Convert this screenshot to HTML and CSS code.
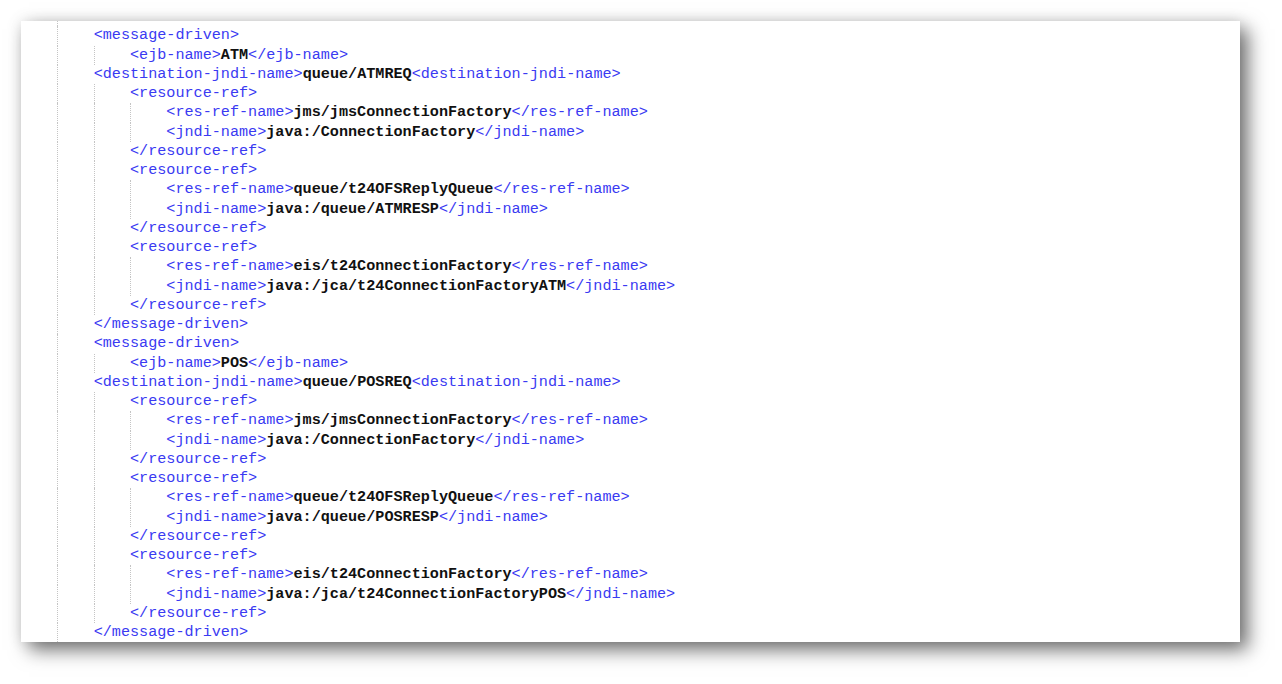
FILE: index.html
```html
<!DOCTYPE html>
<html lang="en">
<head>
  <meta charset="UTF-8" />
  <title>ejb-jar.xml</title>
  <link rel="stylesheet" href="styles.css">
</head>
<body>
  <div class="sheet">
    <div class="code">
      <div class="line"><i></i><span class="t">&lt;/session&gt;</span></div>
      <div class="line"><i></i><span class="t">&lt;message-driven&gt;</span></div>
      <div class="line"><i></i><i></i><span class="t">&lt;ejb-name&gt;</span><b>ATM</b><span class="t">&lt;/ejb-name&gt;</span></div>
      <div class="line"><i></i><span class="t">&lt;destination-jndi-name&gt;</span><b>queue/ATMREQ</b><span class="t">&lt;destination-jndi-name&gt;</span></div>
      <div class="line"><i></i><i></i><span class="t">&lt;resource-ref&gt;</span></div>
      <div class="line"><i></i><i></i><i></i><span class="t">&lt;res-ref-name&gt;</span><b>jms/jmsConnectionFactory</b><span class="t">&lt;/res-ref-name&gt;</span></div>
      <div class="line"><i></i><i></i><i></i><span class="t">&lt;jndi-name&gt;</span><b>java:/ConnectionFactory</b><span class="t">&lt;/jndi-name&gt;</span></div>
      <div class="line"><i></i><i></i><span class="t">&lt;/resource-ref&gt;</span></div>
      <div class="line"><i></i><i></i><span class="t">&lt;resource-ref&gt;</span></div>
      <div class="line"><i></i><i></i><i></i><span class="t">&lt;res-ref-name&gt;</span><b>queue/t24OFSReplyQueue</b><span class="t">&lt;/res-ref-name&gt;</span></div>
      <div class="line"><i></i><i></i><i></i><span class="t">&lt;jndi-name&gt;</span><b>java:/queue/ATMRESP</b><span class="t">&lt;/jndi-name&gt;</span></div>
      <div class="line"><i></i><i></i><span class="t">&lt;/resource-ref&gt;</span></div>
      <div class="line"><i></i><i></i><span class="t">&lt;resource-ref&gt;</span></div>
      <div class="line"><i></i><i></i><i></i><span class="t">&lt;res-ref-name&gt;</span><b>eis/t24ConnectionFactory</b><span class="t">&lt;/res-ref-name&gt;</span></div>
      <div class="line"><i></i><i></i><i></i><span class="t">&lt;jndi-name&gt;</span><b>java:/jca/t24ConnectionFactoryATM</b><span class="t">&lt;/jndi-name&gt;</span></div>
      <div class="line"><i></i><i></i><span class="t">&lt;/resource-ref&gt;</span></div>
      <div class="line"><i></i><span class="t">&lt;/message-driven&gt;</span></div>
      <div class="line"><i></i><span class="t">&lt;message-driven&gt;</span></div>
      <div class="line"><i></i><i></i><span class="t">&lt;ejb-name&gt;</span><b>POS</b><span class="t">&lt;/ejb-name&gt;</span></div>
      <div class="line"><i></i><span class="t">&lt;destination-jndi-name&gt;</span><b>queue/POSREQ</b><span class="t">&lt;destination-jndi-name&gt;</span></div>
      <div class="line"><i></i><i></i><span class="t">&lt;resource-ref&gt;</span></div>
      <div class="line"><i></i><i></i><i></i><span class="t">&lt;res-ref-name&gt;</span><b>jms/jmsConnectionFactory</b><span class="t">&lt;/res-ref-name&gt;</span></div>
      <div class="line"><i></i><i></i><i></i><span class="t">&lt;jndi-name&gt;</span><b>java:/ConnectionFactory</b><span class="t">&lt;/jndi-name&gt;</span></div>
      <div class="line"><i></i><i></i><span class="t">&lt;/resource-ref&gt;</span></div>
      <div class="line"><i></i><i></i><span class="t">&lt;resource-ref&gt;</span></div>
      <div class="line"><i></i><i></i><i></i><span class="t">&lt;res-ref-name&gt;</span><b>queue/t24OFSReplyQueue</b><span class="t">&lt;/res-ref-name&gt;</span></div>
      <div class="line"><i></i><i></i><i></i><span class="t">&lt;jndi-name&gt;</span><b>java:/queue/POSRESP</b><span class="t">&lt;/jndi-name&gt;</span></div>
      <div class="line"><i></i><i></i><span class="t">&lt;/resource-ref&gt;</span></div>
      <div class="line"><i></i><i></i><span class="t">&lt;resource-ref&gt;</span></div>
      <div class="line"><i></i><i></i><i></i><span class="t">&lt;res-ref-name&gt;</span><b>eis/t24ConnectionFactory</b><span class="t">&lt;/res-ref-name&gt;</span></div>
      <div class="line"><i></i><i></i><i></i><span class="t">&lt;jndi-name&gt;</span><b>java:/jca/t24ConnectionFactoryPOS</b><span class="t">&lt;/jndi-name&gt;</span></div>
      <div class="line"><i></i><i></i><span class="t">&lt;/resource-ref&gt;</span></div>
      <div class="line"><i></i><span class="t">&lt;/message-driven&gt;</span></div>
    </div>
  </div>
</body>
</html>
```

FILE: styles.css
```css
* {
  margin: 0;
  padding: 0;
  box-sizing: border-box;
}

body {
  background: #fff;
  padding: 21px 0 0 21px;
  min-height: 100vh;
}

/* the editor window, cut out with a drop shadow */
.sheet {
  width: 1219px;
  height: 621px;
  background: #fff;
  overflow: hidden;
  box-shadow: 8px 8px 18px rgba(0, 0, 0, 0.55), 0 0 14px rgba(0, 0, 0, 0.1);
}

.code {
  margin-top: -13.9px;
  padding-left: 4ch;
  font-family: "Liberation Mono", "Courier New", monospace;
  font-size: 15.15px;
  line-height: 19.26px;
  color: #111;
}

.line {
  height: 19.26px;
  white-space: pre;
}

/* indent guides */
.line i {
  display: inline-block;
  width: 4ch;
  height: 19.26px;
  vertical-align: top;
  border-left: 1px dotted #c4c4c4;
}

.t {
  color: #3a3af2;
}

.line b {
  font-weight: bold;
  color: #111;
}
```
